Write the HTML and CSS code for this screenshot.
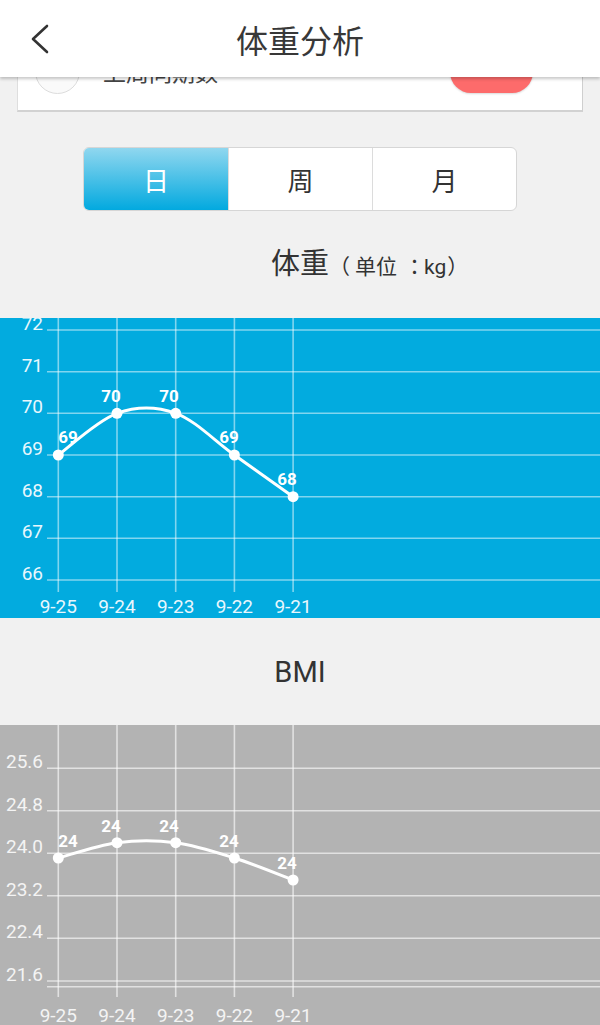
FILE: index.html
```html
<!DOCTYPE html>
<html lang="zh-CN">
<head>
<meta charset="utf-8">
<title>体重分析</title>
<link rel="stylesheet" href="styles.css">
</head>
<body>
<div class="screen">
  <header class="topbar">
    <svg class="back" width="20" height="30" viewBox="0 0 20 30" aria-hidden="true"><polyline points="17,2 3,15 17,28" fill="none" stroke="#333" stroke-width="2.6" stroke-linecap="round" stroke-linejoin="round"/></svg>
    <h1 class="title">体重分析</h1>
    <span class="spacer"></span>
  </header>

  <main class="content">
    <section class="card">
      <div class="avatar"></div>
      <span class="card-text">上周同期数</span>
      <span class="pill"></span>
    </section>

    <div class="segmented">
      <span class="seg active">日</span>
      <span class="seg">周</span>
      <span class="seg">月</span>
    </div>

    <h2 class="chart-title"><span class="main">体重</span><span class="unit" lang="zh-TW"><span class="p-open">（</span>单位<span class="colon">：</span>kg<span class="p-close">）</span></span></h2>

    <div class="chart chart-blue">
      <svg width="600" height="300" viewBox="0 0 600 300">
        <g class="grid">
          <line x1="47" y1="12" x2="600" y2="12"/>
          <line x1="47" y1="53.7" x2="600" y2="53.7"/>
          <line x1="47" y1="95.3" x2="600" y2="95.3"/>
          <line x1="47" y1="137" x2="600" y2="137"/>
          <line x1="47" y1="178.7" x2="600" y2="178.7"/>
          <line x1="47" y1="220.3" x2="600" y2="220.3"/>
          <line x1="47" y1="262" x2="600" y2="262"/>
          <line x1="58.3" y1="0" x2="58.3" y2="274"/>
          <line x1="117" y1="0" x2="117" y2="274"/>
          <line x1="175.7" y1="0" x2="175.7" y2="274"/>
          <line x1="234.4" y1="0" x2="234.4" y2="274"/>
          <line x1="293.1" y1="0" x2="293.1" y2="274"/>
        </g>
        <g class="ylabels">
          <text x="43" y="12">72</text>
          <text x="43" y="53.7">71</text>
          <text x="43" y="95.3">70</text>
          <text x="43" y="137">69</text>
          <text x="43" y="178.7">68</text>
          <text x="43" y="220.3">67</text>
          <text x="43" y="262">66</text>
        </g>
        <g class="xlabels">
          <text x="58.3" y="295">9-25</text>
          <text x="117" y="295">9-24</text>
          <text x="175.7" y="295">9-23</text>
          <text x="234.4" y="295">9-22</text>
          <text x="293.1" y="295">9-21</text>
        </g>
        <path class="curve" d="M58.3,137 C68.1,130.05 97.43,102.25 117,95.3 C136.57,88.35 156.13,88.35 175.7,95.3 C195.27,102.25 214.83,123.1 234.4,137 C253.97,150.9 283.32,171.75 293.1,178.7"/>
        <g class="dots">
          <circle cx="58.3" cy="137" r="5.5"/>
          <circle cx="117" cy="95.3" r="5.5"/>
          <circle cx="175.7" cy="95.3" r="5.5"/>
          <circle cx="234.4" cy="137" r="5.5"/>
          <circle cx="293.1" cy="178.7" r="5.5"/>
        </g>
        <g class="values">
          <text x="68" y="125.4">69</text>
          <text x="111" y="83.7">70</text>
          <text x="169" y="83.7">70</text>
          <text x="229" y="125.4">69</text>
          <text x="287" y="167.1">68</text>
        </g>
      </svg>
    </div>

    <h2 class="chart-title"><span class="main">BMI</span></h2>

    <div class="chart chart-gray">
      <svg width="600" height="300" viewBox="0 0 600 300">
        <g class="grid">
          <line x1="47" y1="43.3" x2="600" y2="43.3"/>
          <line x1="47" y1="85.7" x2="600" y2="85.7"/>
          <line x1="47" y1="128.3" x2="600" y2="128.3"/>
          <line x1="47" y1="170.7" x2="600" y2="170.7"/>
          <line x1="47" y1="213.3" x2="600" y2="213.3"/>
          <line x1="47" y1="256" x2="600" y2="256"/>
          <line x1="47" y1="261.7" x2="600" y2="261.7"/>
          <line x1="58.3" y1="0" x2="58.3" y2="272"/>
          <line x1="117" y1="0" x2="117" y2="272"/>
          <line x1="175.7" y1="0" x2="175.7" y2="272"/>
          <line x1="234.4" y1="0" x2="234.4" y2="272"/>
          <line x1="293.1" y1="0" x2="293.1" y2="272"/>
        </g>
        <g class="ylabels">
          <text x="43" y="43.3">25.6</text>
          <text x="43" y="85.7">24.8</text>
          <text x="43" y="128.3">24.0</text>
          <text x="43" y="170.7">23.2</text>
          <text x="43" y="213.3">22.4</text>
          <text x="43" y="256">21.6</text>
        </g>
        <g class="xlabels">
          <text x="58.3" y="296.5">9-25</text>
          <text x="117" y="296.5">9-24</text>
          <text x="175.7" y="296.5">9-23</text>
          <text x="234.4" y="296.5">9-22</text>
          <text x="293.1" y="296.5">9-21</text>
        </g>
        <path class="curve" d="M58.3,133 C68.08,130.45 97.43,120.25 117,117.7 C136.57,115.15 156.13,115.15 175.7,117.7 C195.27,120.25 214.83,126.78 234.4,133 C253.97,139.22 283.32,151.33 293.1,155"/>
        <g class="dots">
          <circle cx="58.3" cy="133" r="5.5"/>
          <circle cx="117" cy="117.7" r="5.5"/>
          <circle cx="175.7" cy="117.7" r="5.5"/>
          <circle cx="234.4" cy="133" r="5.5"/>
          <circle cx="293.1" cy="155" r="5.5"/>
        </g>
        <g class="values">
          <text x="68" y="122">24</text>
          <text x="111" y="106.7">24</text>
          <text x="169" y="106.7">24</text>
          <text x="229" y="122">24</text>
          <text x="287" y="144">24</text>
        </g>
      </svg>
    </div>
  </main>
</div>
</body>
</html>
```

FILE: styles.css
```css
* { box-sizing: border-box; }

html, body {
  margin: 0;
  padding: 0;
  background: #f1f1f1;
  font-family: Roboto, "Noto Sans CJK SC", sans-serif;
  color: #333;
}

.screen {
  position: relative;
  width: 600px;
  height: 1025px;
  overflow: hidden;
  background: #f1f1f1;
}

.topbar {
  position: absolute;
  top: 0;
  left: 0;
  right: 0;
  height: 77px;
  background: #fff;
  box-shadow: 0 2px 3px rgba(0, 0, 0, 0.22);
  display: grid;
  grid-template-columns: 1fr auto 1fr;
  align-items: center;
  z-index: 5;
}

.back {
  justify-self: start;
  margin-left: 30px;
  display: block;
}

.title {
  margin: 0;
  font-family: "Noto Sans CJK SC", sans-serif;
  font-size: 32px;
  font-weight: 400;
  line-height: 1;
  color: #383838;
}

.content {
  display: flex;
  flex-direction: column;
  padding-top: 32px;
}

.card {
  margin: 0 17px;
  height: 80px;
  background: #fff;
  border: 1px solid #dedede;
  border-right-color: #cfcfcf;
  border-bottom: 2px solid #d2d2d2;
  display: flex;
  align-items: center;
  padding-left: 17px;
  padding-right: 49px;
}

.avatar {
  width: 45px;
  height: 45px;
  border-radius: 50%;
  border: 1px solid #dcdcdc;
  background: #fafafa;
  flex: none;
}

.card-text {
  flex: 1;
  margin-left: 23px;
  margin-top: -2px;
  font-family: "Noto Sans CJK SC", sans-serif;
  font-size: 23px;
  color: #444;
}

.pill {
  width: 83px;
  height: 42px;
  border-radius: 21px;
  background: #fd6b6b;
  box-shadow: 0 1px 2px rgba(0, 0, 0, 0.15);
}

.segmented {
  margin: 35px auto 0;
  width: 434px;
  height: 64px;
  display: grid;
  grid-template-columns: repeat(3, 1fr);
  border: 1px solid #d6d6d6;
  border-radius: 6px;
  overflow: hidden;
  background: #fff;
}

.seg {
  display: flex;
  align-items: center;
  justify-content: center;
  font-family: "Noto Sans CJK SC", sans-serif;
  font-size: 26px;
  color: #333;
  border-left: 1px solid #dcdcdc;
}

.seg:first-child { border-left: none; }

.seg.active {
  color: #fff;
  background: linear-gradient(#90d7ef, #02a9df);
}

.chart-title {
  margin: 39px 0;
  display: grid;
  grid-template-columns: 1fr auto 1fr;
  align-items: baseline;
  font-weight: 400;
  line-height: 29px;
  height: 29px;
}

.chart-title .main {
  grid-column: 2;
  font-size: 29px;
  color: #333;
}

.chart-title .unit {
  grid-column: 3;
  justify-self: start;
  font-family: Roboto, "Noto Sans CJK TC", sans-serif;
  font-size: 21px;
  color: #333;
  white-space: nowrap;
}

.unit .p-open { margin-right: 5px; }
.unit .colon { margin-left: 7px; margin-right: -1px; }
.unit .p-close { margin-left: 1px; }

.chart {
  height: 300px;
  overflow: hidden;
}

.chart svg { display: block; }

.chart-blue { background: #02abdf; }
.chart-gray { background: #b3b3b3; }

.chart-blue + .chart-title { margin: 40px 0 38px; }

.grid line {
  stroke-width: 1.6;
}
.chart-blue .grid line { stroke: rgba(255, 255, 255, 0.5); }
.chart-gray .grid line { stroke: rgba(255, 255, 255, 0.6); }

.ylabels text {
  font-family: Roboto, sans-serif;
  font-size: 19px;
  text-anchor: end;
}
.xlabels text {
  font-family: Roboto, sans-serif;
  font-size: 19px;
  text-anchor: middle;
}
.chart-blue .ylabels text,
.chart-blue .xlabels text { fill: #e9f7fd; }
.chart-gray .ylabels text,
.chart-gray .xlabels text { fill: #f4f4f4; }

.curve {
  fill: none;
  stroke: #fff;
  stroke-width: 3;
  stroke-linecap: round;
}

.dots circle { fill: #fff; }

.values text {
  font-family: Roboto, sans-serif;
  font-size: 17px;
  font-weight: 700;
  fill: #fff;
  text-anchor: middle;
}
```
